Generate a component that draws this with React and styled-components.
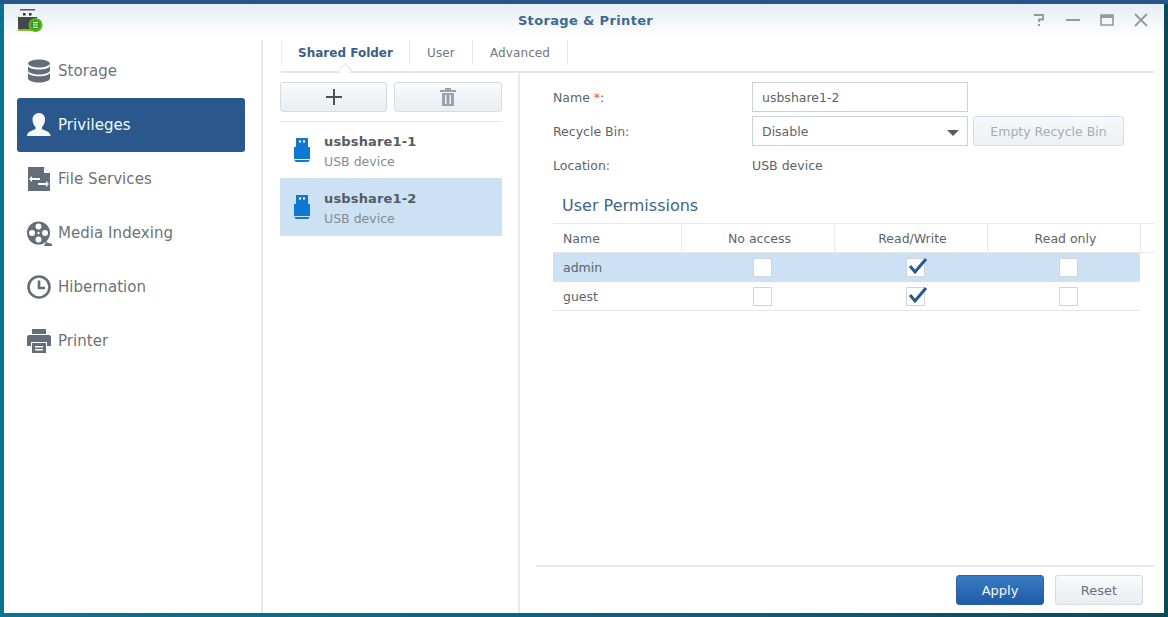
import React from "react";
import styled, { createGlobalStyle } from "styled-components";

const Global = createGlobalStyle`
  html, body { margin: 0; padding: 0; }
  body {
    width: 1168px;
    height: 617px;
    overflow: hidden;
    font-family: "DejaVu Sans", Verdana, sans-serif;
    background: #0b6c8c;
  }
`;

const Desktop = styled.div`
  width: 1168px;
  height: 617px;
  box-sizing: border-box;
  padding: 4px;
  background:
    linear-gradient(#25558a 0 4px, transparent 4px),
    linear-gradient(90deg, #0a7390 0%, #0f5d7d 60%, #0a4a58 100%);
`;

const Win = styled.div`
  width: 100%;
  height: 100%;
  display: flex;
  flex-direction: column;
  background: #fff;
`;

const TitleBar = styled.div`
  height: 32px;
  flex: none;
  display: grid;
  grid-template-columns: 1fr auto 1fr;
  align-items: center;
  padding: 0 14px 0 13px;
  background: linear-gradient(#e6edf3, #fbfcfd 90%, #fff);
`;

const AppIcon = styled.svg`
  width: 26px;
  height: 28px;
  display: block;
  margin-top: 4px;
`;

const Title = styled.div`
  color: #3b6a92;
  font-size: 13px;
  font-weight: bold;
  letter-spacing: 0.35px;
  margin-left: 4px;
`;

const WinButtons = styled.div`
  display: flex;
  justify-content: flex-end;
  gap: 16px;
  align-items: center;
`;

const WinIcon = styled.svg`
  width: 18px;
  height: 18px;
  display: block;
  color: #8f9aa3;
`;

const Body = styled.div`
  flex: 1;
  display: flex;
  min-height: 0;
`;

const Sidebar = styled.div`
  width: 259px;
  flex: none;
  box-sizing: border-box;
  border-right: 2px solid #e7eaec;
  margin-top: 4px;
  padding: 4px 15px 0 13px;
  display: flex;
  flex-direction: column;
`;

const NavItem = styled.div`
  height: 54px;
  width: 228px;
  box-sizing: border-box;
  display: flex;
  align-items: center;
  gap: 6px;
  padding-left: 9px;
  border-radius: 3px;
  font-size: 15px;
  letter-spacing: 0.05px;
  color: ${(p) => (p.$active ? "#f4f7fa" : "#6d7378")};
  background: ${(p) => (p.$active ? "#2a578c" : "transparent")};
`;

const NavIcon = styled.svg`
  width: 26px;
  height: 26px;
  flex: none;
  display: block;
  color: ${(p) => (p.$active ? "#f6f8fa" : "#646e78")};
`;

const Main = styled.div`
  flex: 1;
  min-width: 0;
  display: flex;
  flex-direction: column;
  padding: 4px 10px 0 18px;
`;

const Tabs = styled.div`
  height: 33px;
  flex: none;
  display: flex;
  align-items: stretch;
  border-bottom: 2px solid #e4e7e9;
  box-sizing: border-box;
`;

const Tab = styled.div`
  display: flex;
  align-items: center;
  justify-content: center;
  width: ${(p) => p.$w}px;
  box-sizing: border-box;
  font-size: 12px;
  letter-spacing: ${(p) => (p.$active ? "0" : "0.1px")};
  border-right: 1px solid #e4e7e9;
  margin-bottom: 6px;
  color: ${(p) => (p.$active ? "#3b5f85" : "#70777d")};
  font-weight: ${(p) => (p.$active ? "bold" : "normal")};
  ${(p) => p.$active && "border-left: 1px solid #eceef0;"}
  position: relative;
`;

const TabArrow = styled.span`
  position: absolute;
  left: 58px;
  bottom: -10px;
  width: 9px;
  height: 9px;
  background: #fff;
  border-left: 1px solid #e4e7e9;
  border-top: 1px solid #e4e7e9;
  transform: rotate(45deg);
`;

const Split = styled.div`
  flex: 1;
  min-height: 0;
  display: flex;
`;

const FolderCol = styled.div`
  width: 240px;
  flex: none;
  box-sizing: border-box;
  border-right: 2px solid #e7eaec;
  padding: 9px 16px 0 0;
  margin-left: -1px;
`;

const ActionRow = styled.div`
  display: flex;
  gap: 7px;
  padding-bottom: 9px;
  border-bottom: 1px solid #e6e9eb;
`;

const ActionBtn = styled.div`
  width: 107px;
  height: 30px;
  box-sizing: border-box;
  border: 1px solid #d4dbe1;
  border-radius: 3px;
  background: linear-gradient(#f8fafb, #e9eef2);
  display: flex;
  align-items: center;
  justify-content: center;
  &:last-child { width: 108px; }
`;

const FolderItem = styled.div`
  height: ${(p) => (p.$active ? 58 : 56)}px;
  box-sizing: border-box;
  display: flex;
  align-items: center;
  padding: 5px 0 0 13px;
  gap: 13px;
  background: ${(p) => (p.$active ? "#cce2f4" : "transparent")};
`;

const UsbIcon = styled.svg`
  width: 18px;
  height: 26px;
  flex: none;
  display: block;
  margin-top: -5px;
`;

const FolderName = styled.div`
  font-size: 13px;
  font-weight: bold;
  color: #555c63;
  letter-spacing: 0.15px;
  line-height: 17px;
`;

const FolderSub = styled.div`
  font-size: 12.5px;
  color: #858c92;
  line-height: 23px;
`;

const Detail = styled.div`
  flex: 1;
  min-width: 0;
  display: flex;
  flex-direction: column;
  padding: 0 0 0 16px;
`;

const DetailBody = styled.div`
  flex: 1;
  padding: 9px 0 0 17px;
`;

const FormRow = styled.div`
  display: flex;
  align-items: center;
  height: 30px;
  margin-bottom: 4px;
  font-size: 12.5px;
  color: #5d6469;
`;

const FormLabel = styled.div`
  width: 199px;
  flex: none;
`;

const Req = styled.span`
  color: #e2574c;
`;

const TextInput = styled.div`
  width: 216px;
  height: 30px;
  box-sizing: border-box;
  border: 1px solid #c9d2d9;
  padding-left: 9px;
  display: flex;
  align-items: center;
  background: #fff;
  color: #5d6469;
  position: relative;
`;

const Caret = styled.span`
  position: absolute;
  right: 8px;
  top: 13px;
  width: 0;
  height: 0;
  border-left: 6px solid transparent;
  border-right: 6px solid transparent;
  border-top: 6px solid #555c63;
`;

const GhostBtn = styled.div`
  width: 151px;
  height: 30px;
  box-sizing: border-box;
  margin-left: 5px;
  border: 1px solid #d6dfe6;
  border-radius: 3px;
  background: linear-gradient(#f6f9fb, #ecf1f5);
  color: #a3adb5;
  display: flex;
  align-items: center;
  justify-content: center;
`;

const Heading = styled.div`
  font-size: 16px;
  color: #3d6585;
  margin: 15px 0 6px 9px;
  line-height: 22px;
`;

const Table = styled.div`
  border-top: 1px solid #e4e8eb;
`;

const TableRow = styled.div`
  display: grid;
  grid-template-columns: 129px 153px 153px 153px;
  height: 29px;
  width: ${(p) => (p.$head ? "100%" : "587px")};
  box-sizing: border-box;
  align-items: center;
  font-size: 12.5px;
  color: #5d6469;
  border-bottom: 1px solid ${(p) => (p.$sel ? "#cce2f4" : "#e4e8eb")};
  background: ${(p) => (p.$sel ? "#cce2f4" : "transparent")};
`;

const Cell = styled.div`
  height: 100%;
  box-sizing: border-box;
  display: flex;
  align-items: center;
  justify-content: ${(p) => (p.$left ? "flex-start" : "center")};
  padding-left: ${(p) => (p.$left ? "10px" : p.$head ? "3px" : "7px")};
  border-right: ${(p) => (p.$head ? "1px solid #e8ebed" : "none")};
`;

const Check = styled.div`
  width: 19px;
  height: 19px;
  box-sizing: border-box;
  border: 1px solid #cfd6db;
  background: #fff;
  position: relative;
`;

const CheckMark = styled.svg`
  position: absolute;
  left: 0;
  top: -3px;
  width: 21px;
  height: 20px;
`;

const Footer = styled.div`
  flex: none;
  height: 48px;
  box-sizing: border-box;
  border-top: 2px solid #e7eaec;
  display: flex;
  justify-content: flex-end;
  align-items: flex-start;
  gap: 11px;
  padding: 8px 11px 0 0;
`;

const FootBtn = styled.div`
  width: 88px;
  height: 30px;
  box-sizing: border-box;
  border-radius: 3px;
  display: flex;
  align-items: center;
  justify-content: center;
  font-size: 13px;
  ${(p) =>
    p.$primary
      ? "background: linear-gradient(#3a7cc4, #1f5ba6); border: 1px solid #2a64a8; color: #f5f8fb;"
      : "background: linear-gradient(#f8fafb, #e9eef2); border: 1px solid #d4dbe1; color: #6a7177;"}
`;

const nav = [
  {
    label: "Storage",
    icon: (
      <>
        <ellipse cx="13" cy="5.5" rx="11" ry="4" fill="currentColor" />
        <path d="M2 8.2c1.600 2.200 5.800 3.200 11 3.200s9.400-1 11-3.200v4.300c0 2.200-5 4-11 4s-11-1.800-11-4z" fill="currentColor" />
        <path d="M2 15c1.600 2.200 5.800 3.200 11 3.200s9.400-1 11-3.200v5.400c0 2.200-5 4-11 4s-11-1.800-11-4z" fill="currentColor" />
      </>
    ),
  },
  {
    label: "Privileges",
    active: true,
    icon: (
      <path
        d="M13 1c4 0 6 3 6 6.500 0 3-1.200 6-3 7.500v2c1 1 7.500 2 8.500 6v1H1v-1c1-4 7.500-5 8.500-6v-2C7.700 13.500 6.500 10.500 6.500 7.500 6.500 4 9 1 13 1z"
        fill="currentColor"
      />
    ),
  },
  {
    label: "File Services",
    icon: (
      <>
        <path d="M2 1h16l6 6v18H2z" fill="currentColor" />
        <path d="M18 1v6h6z" fill="#fff" />
        <path d="M6 11h8v2H6v2l-3-3 3-3zM20 16h-8v2h8v2l3-3-3-3z" fill="#fff" transform="translate(0 1)" />
      </>
    ),
  },
  {
    label: "Media Indexing",
    icon: (
      <>
        <circle cx="12.5" cy="13" r="11.5" fill="currentColor" />
        <path d="M20 22l6 2v2h-8z" fill="currentColor" />
        <circle cx="12.5" cy="6.5" r="3" fill="#fff" />
        <circle cx="12.5" cy="19.5" r="3" fill="#fff" />
        <circle cx="6" cy="13" r="3" fill="#fff" />
        <circle cx="19" cy="13" r="3" fill="#fff" />
        <circle cx="12.5" cy="13" r="1.2" fill="#fff" />
      </>
    ),
  },
  {
    label: "Hibernation",
    icon: (
      <>
        <circle cx="13" cy="13" r="10.5" fill="none" stroke="currentColor" strokeWidth="2.6" />
        <path d="M13 6.500V14h6" fill="none" stroke="currentColor" strokeWidth="2.6" />
      </>
    ),
  },
  {
    label: "Printer",
    icon: (
      <>
        <path d="M6 1h14v5H6z" fill="currentColor" />
        <path d="M3 7h20a2 2 0 0 1 2 2v9h-4v-4H5v4H1V9a2 2 0 0 1 2-2z" fill="currentColor" />
        <path d="M6 15h14v10H6z" fill="currentColor" />
        <path d="M9 18h8v1.500H9zM9 21h8v1.500H9z" fill="#fff" />
      </>
    ),
  },
];

const Usb = () => (
  <UsbIcon viewBox="0 0 18 26">
    <path d="M3 1h12v9H3z" fill="#1377cc" />
    <path d="M6 3.500h2v2H6zM10 3.500h2v2h-2z" fill="#fff" />
    <path d="M1 10h16v12H1z" fill="#0f78d4" />
    <path d="M1 23h16l-2 2H3z" fill="#1377cc" />
  </UsbIcon>
);

const perms = [
  { name: "admin", sel: true },
  { name: "guest", sel: false },
];

export default function App() {
  return (
    <>
      <Global />
      <Desktop>
        <Win>
          <TitleBar>
            <AppIcon viewBox="0 0 26 28">
              <path d="M3 1h15v1.500H3z" fill="#55595c" />
              <path d="M4 3h13v6H4z" fill="#f2f3f4" />
              <path d="M6 5h2.500v2.500H6zM12 5h2.500v2.500H12z" fill="#2f3235" />
              <path d="M1 9h19v14H1z" fill="#45484b" />
              <path d="M1 21h14v2H1z" fill="#7fc02a" />
              <circle cx="18.5" cy="17" r="7" fill="#55b41e" />
              <circle cx="18.5" cy="17" r="4.5" fill="#2f9a17" />
              <path d="M16 14h5v1.200h-5zM16 16.400h5v1.200h-5zM16 18.800h5V20h-5z" fill="#e8f7d8" />
            </AppIcon>
            <Title>Storage &amp; Printer</Title>
            <WinButtons>
              <WinIcon viewBox="0 0 18 18">
                <path d="M4 4h9v4.500H9V11" fill="none" stroke="currentColor" strokeWidth="1.800" />
                <path d="M8 13h2v2H8z" fill="currentColor" />
              </WinIcon>
              <WinIcon viewBox="0 0 18 18">
                <path d="M2 9h14" stroke="currentColor" strokeWidth="2" />
              </WinIcon>
              <WinIcon viewBox="0 0 18 18">
                <path d="M3 4h12v10H3z" fill="none" stroke="currentColor" strokeWidth="1.600" />
                <path d="M3 4h12v3H3z" fill="currentColor" />
              </WinIcon>
              <WinIcon viewBox="0 0 18 18">
                <path d="M3 3l12 12M15 3L3 15" stroke="currentColor" strokeWidth="1.800" />
              </WinIcon>
            </WinButtons>
          </TitleBar>
          <Body>
            <Sidebar>
              {nav.map((n) => (
                <NavItem key={n.label} $active={n.active}>
                  <NavIcon viewBox="0 0 26 26" $active={n.active}>
                    {n.icon}
                  </NavIcon>
                  {n.label}
                </NavItem>
              ))}
            </Sidebar>
            <Main>
              <Tabs>
                <Tab $active $w={129}>
                  Shared Folder
                  <TabArrow />
                </Tab>
                <Tab $w={63}>User</Tab>
                <Tab $w={95}>Advanced</Tab>
              </Tabs>
              <Split>
                <FolderCol>
                  <ActionRow>
                    <ActionBtn>
                      <svg width="20" height="20" viewBox="0 0 20 20">
                        <path d="M10 2v16M2 10h16" stroke="#4c5358" strokeWidth="2" />
                      </svg>
                    </ActionBtn>
                    <ActionBtn>
                      <svg width="18" height="20" viewBox="0 0 18 20">
                        <path d="M6 1h6v2h5v2H1V3h5z" fill="#9aa3aa" />
                        <path d="M3 6h12v13H3z" fill="#9aa3aa" />
                        <path d="M6 8h1.500v9H6zM10.500 8H12v9h-1.500z" fill="#eef2f5" />
                      </svg>
                    </ActionBtn>
                  </ActionRow>
                  <FolderItem>
                    <Usb />
                    <div>
                      <FolderName>usbshare1-1</FolderName>
                      <FolderSub>USB device</FolderSub>
                    </div>
                  </FolderItem>
                  <FolderItem $active>
                    <Usb />
                    <div>
                      <FolderName>usbshare1-2</FolderName>
                      <FolderSub>USB device</FolderSub>
                    </div>
                  </FolderItem>
                </FolderCol>
                <Detail>
                  <DetailBody>
                    <FormRow>
                      <FormLabel>
                        Name <Req>*</Req>:
                      </FormLabel>
                      <TextInput>usbshare1-2</TextInput>
                    </FormRow>
                    <FormRow>
                      <FormLabel>Recycle Bin:</FormLabel>
                      <TextInput>
                        Disable
                        <Caret />
                      </TextInput>
                      <GhostBtn>Empty Recycle Bin</GhostBtn>
                    </FormRow>
                    <FormRow>
                      <FormLabel>Location:</FormLabel>
                      USB device
                    </FormRow>
                    <Heading>User Permissions</Heading>
                    <Table>
                      <TableRow $head>
                        <Cell $left $head>Name</Cell>
                        <Cell $head>No access</Cell>
                        <Cell $head>Read/Write</Cell>
                        <Cell $head>Read only</Cell>
                      </TableRow>
                      {perms.map((r) => (
                        <TableRow key={r.name} $sel={r.sel}>
                          <Cell $left>{r.name}</Cell>
                          <Cell><Check /></Cell>
                          <Cell>
                            <Check>
                              <CheckMark viewBox="0 0 21 20">
                                <path d="M3 10l5 6L19 3" fill="none" stroke="#2a578c" strokeWidth="3" />
                              </CheckMark>
                            </Check>
                          </Cell>
                          <Cell><Check /></Cell>
                        </TableRow>
                      ))}
                    </Table>
                  </DetailBody>
                  <Footer>
                    <FootBtn $primary>Apply</FootBtn>
                    <FootBtn>Reset</FootBtn>
                  </Footer>
                </Detail>
              </Split>
            </Main>
          </Body>
        </Win>
      </Desktop>
    </>
  );
}
